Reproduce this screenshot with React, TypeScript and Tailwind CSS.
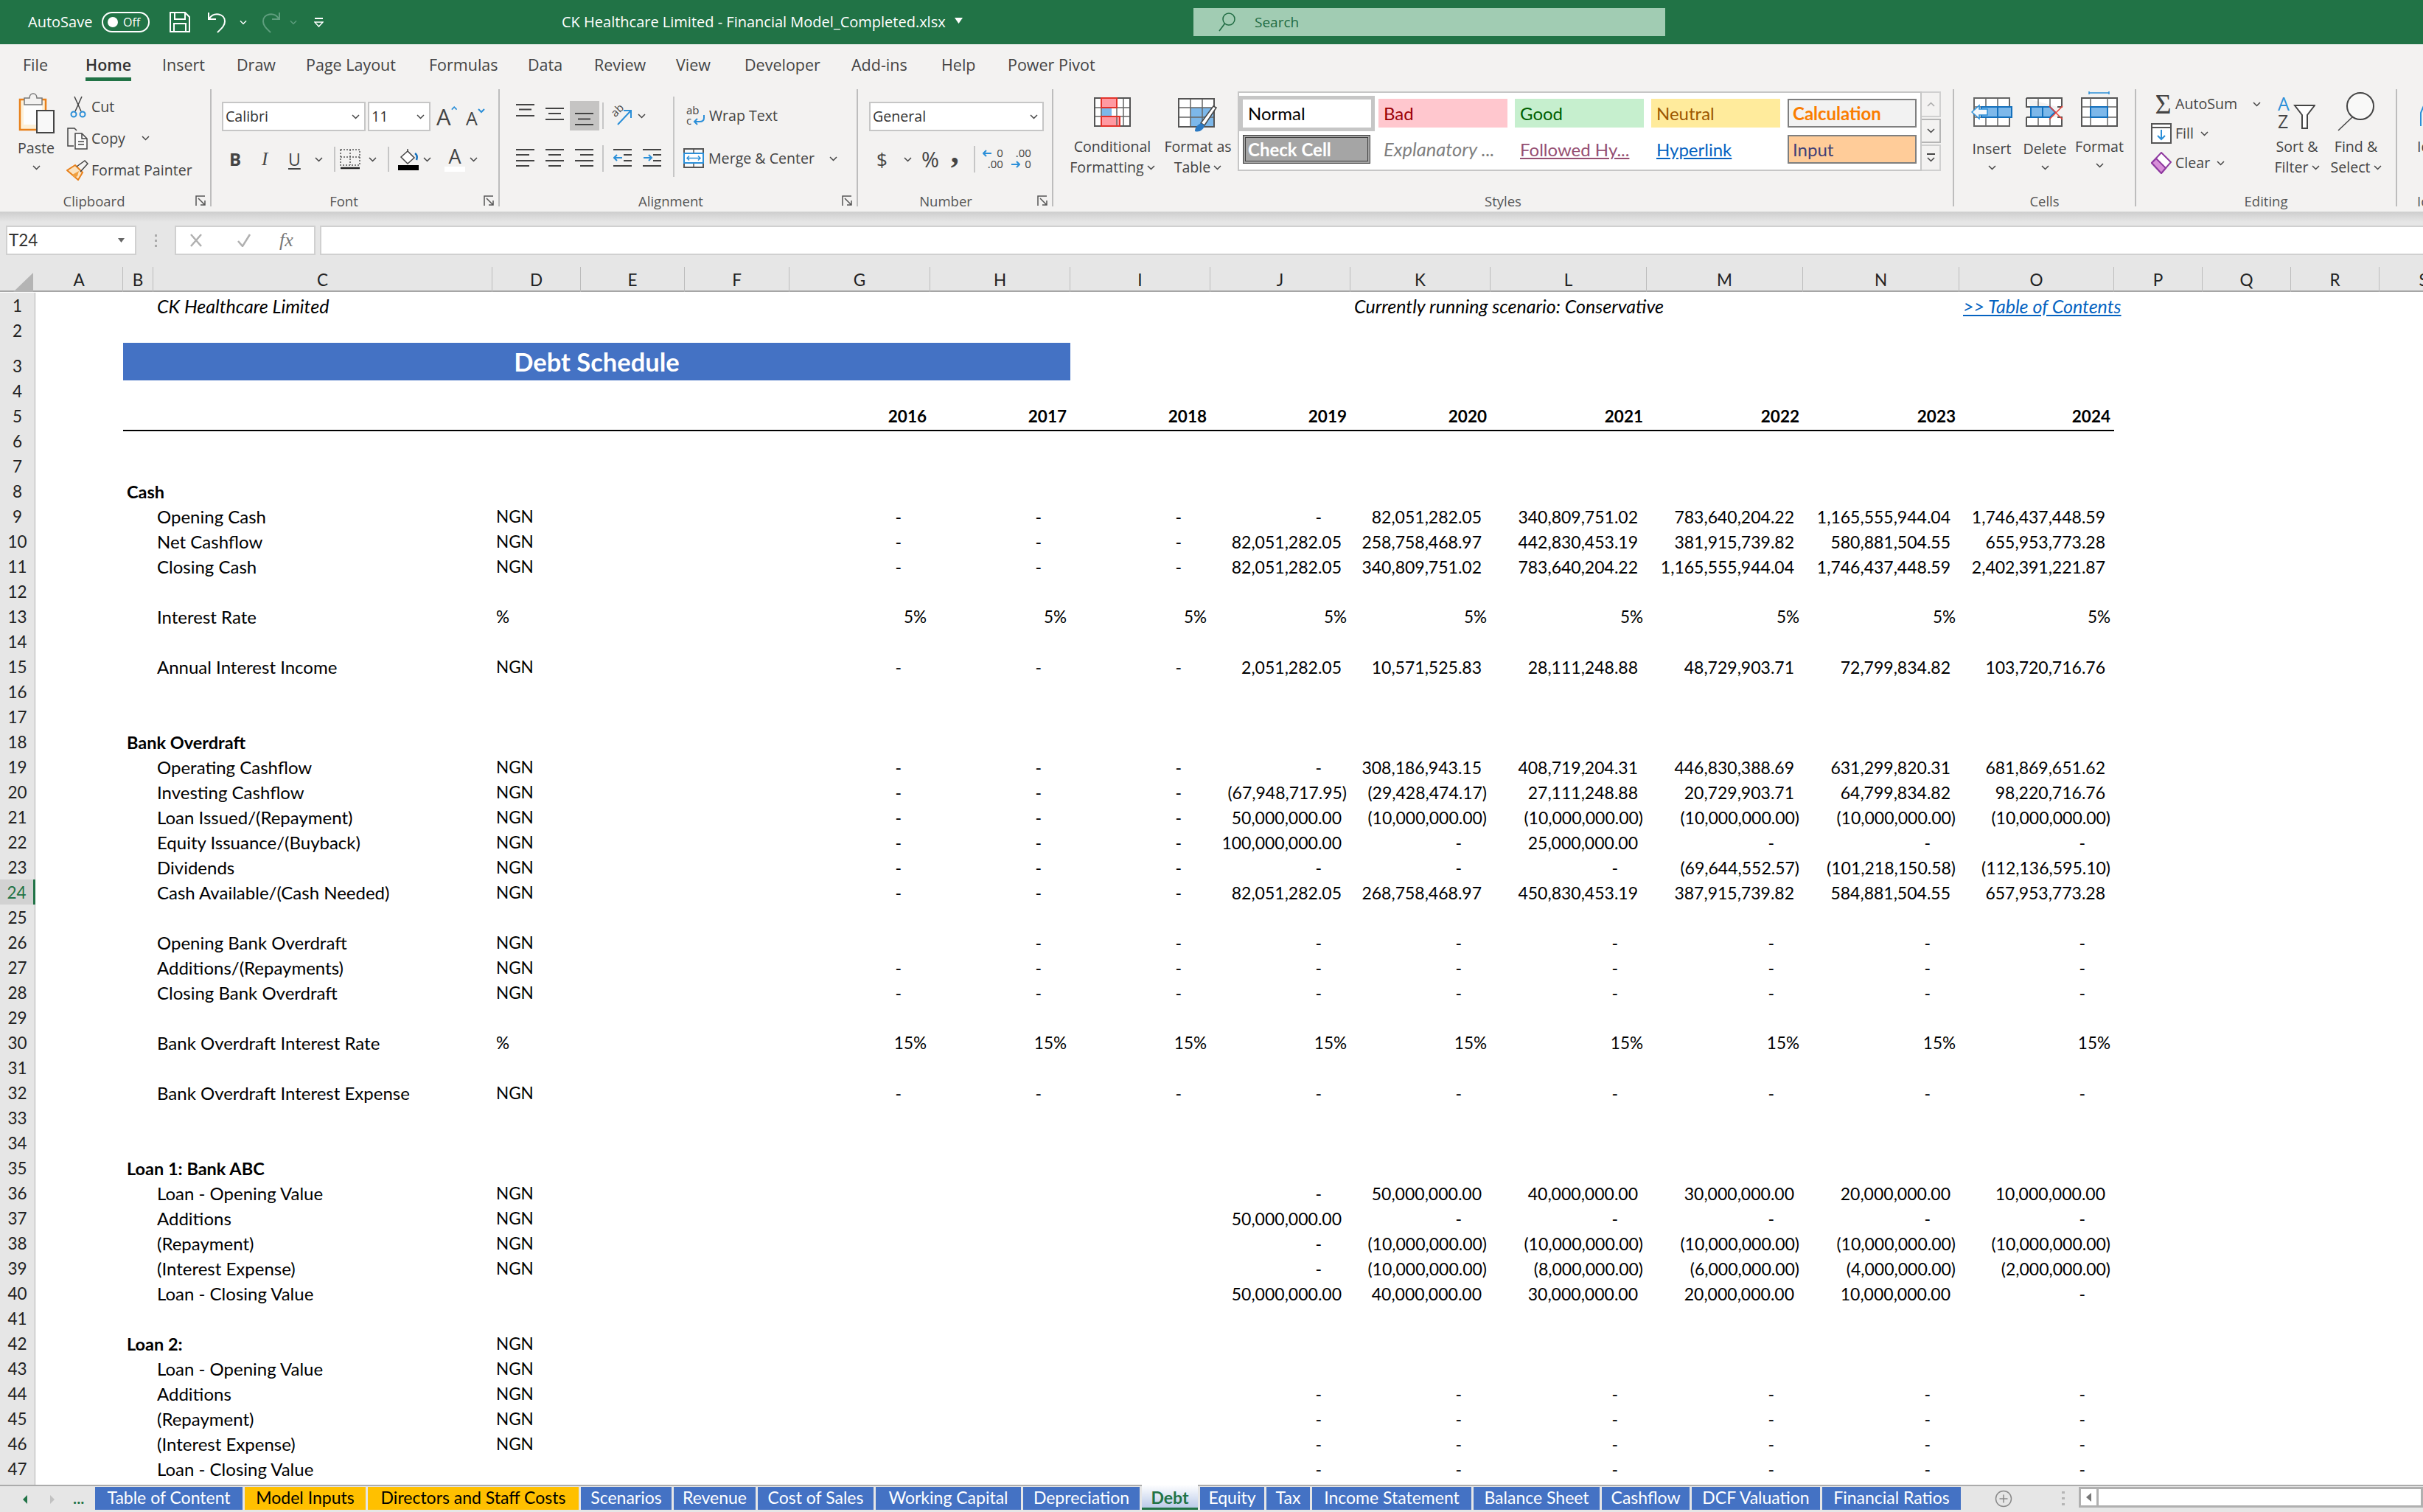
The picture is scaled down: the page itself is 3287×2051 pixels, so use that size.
import type { ReactNode } from "react";

const gridCols =
  "grid grid-cols-[48px_119px_41px_460px_120px_141px_142px_191px_190px_190px_190px_190px_212px_212px_212px_210px_120px_120px_120px_120px]";

const dash3 = ["-", "-", "-"];
const dash6 = ["-", "-", "-", "-", "-", "-"];
const blank3 = ["", "", ""];
const dash9 = [...dash3, ...dash6];

type Row = { b?: string; c?: string; d?: string; v?: string[] };

const rows: Record<number, Row> = {
  1: { c: "CK Healthcare Limited", v: ["", "", "", "", "Currently running scenario: Conservative", "", "", "", ">> Table of Contents"] },
  5: { v: ["2016", "2017", "2018", "2019", "2020", "2021", "2022", "2023", "2024"] },
  8: { b: "Cash" },
  9: { c: "Opening Cash", d: "NGN", v: [...dash3, "-", "82,051,282.05", "340,809,751.02", "783,640,204.22", "1,165,555,944.04", "1,746,437,448.59"] },
  10: { c: "Net Cashflow", d: "NGN", v: [...dash3, "82,051,282.05", "258,758,468.97", "442,830,453.19", "381,915,739.82", "580,881,504.55", "655,953,773.28"] },
  11: { c: "Closing Cash", d: "NGN", v: [...dash3, "82,051,282.05", "340,809,751.02", "783,640,204.22", "1,165,555,944.04", "1,746,437,448.59", "2,402,391,221.87"] },
  13: { c: "Interest Rate", d: "%", v: ["5%", "5%", "5%", "5%", "5%", "5%", "5%", "5%", "5%"] },
  15: { c: "Annual Interest Income", d: "NGN", v: [...dash3, "2,051,282.05", "10,571,525.83", "28,111,248.88", "48,729,903.71", "72,799,834.82", "103,720,716.76"] },
  18: { b: "Bank Overdraft" },
  19: { c: "Operating Cashflow", d: "NGN", v: [...dash3, "-", "308,186,943.15", "408,719,204.31", "446,830,388.69", "631,299,820.31", "681,869,651.62"] },
  20: { c: "Investing Cashflow", d: "NGN", v: [...dash3, "(67,948,717.95)", "(29,428,474.17)", "27,111,248.88", "20,729,903.71", "64,799,834.82", "98,220,716.76"] },
  21: { c: "Loan Issued/(Repayment)", d: "NGN", v: [...dash3, "50,000,000.00", "(10,000,000.00)", "(10,000,000.00)", "(10,000,000.00)", "(10,000,000.00)", "(10,000,000.00)"] },
  22: { c: "Equity Issuance/(Buyback)", d: "NGN", v: [...dash3, "100,000,000.00", "-", "25,000,000.00", "-", "-", "-"] },
  23: { c: "Dividends", d: "NGN", v: [...dash3, "-", "-", "-", "(69,644,552.57)", "(101,218,150.58)", "(112,136,595.10)"] },
  24: { c: "Cash Available/(Cash Needed)", d: "NGN", v: [...dash3, "82,051,282.05", "268,758,468.97", "450,830,453.19", "387,915,739.82", "584,881,504.55", "657,953,773.28"] },
  26: { c: "Opening Bank Overdraft", d: "NGN", v: ["", "-", "-", "-", "-", "-", "-", "-", "-"] },
  27: { c: "Additions/(Repayments)", d: "NGN", v: dash9 },
  28: { c: "Closing Bank Overdraft", d: "NGN", v: dash9 },
  30: { c: "Bank Overdraft Interest Rate", d: "%", v: ["15%", "15%", "15%", "15%", "15%", "15%", "15%", "15%", "15%"] },
  32: { c: "Bank Overdraft Interest Expense", d: "NGN", v: dash9 },
  35: { b: "Loan 1: Bank ABC" },
  36: { c: "Loan - Opening Value", d: "NGN", v: [...blank3, "-", "50,000,000.00", "40,000,000.00", "30,000,000.00", "20,000,000.00", "10,000,000.00"] },
  37: { c: "Additions", d: "NGN", v: [...blank3, "50,000,000.00", "-", "-", "-", "-", "-"] },
  38: { c: "(Repayment)", d: "NGN", v: [...blank3, "-", "(10,000,000.00)", "(10,000,000.00)", "(10,000,000.00)", "(10,000,000.00)", "(10,000,000.00)"] },
  39: { c: "(Interest Expense)", d: "NGN", v: [...blank3, "-", "(10,000,000.00)", "(8,000,000.00)", "(6,000,000.00)", "(4,000,000.00)", "(2,000,000.00)"] },
  40: { c: "Loan - Closing Value", v: [...blank3, "50,000,000.00", "40,000,000.00", "30,000,000.00", "20,000,000.00", "10,000,000.00", "-"] },
  42: { b: "Loan 2:", d: "NGN" },
  43: { c: "Loan - Opening Value", d: "NGN" },
  44: { c: "Additions", d: "NGN", v: [...blank3, ...dash6] },
  45: { c: "(Repayment)", d: "NGN", v: [...blank3, ...dash6] },
  46: { c: "(Interest Expense)", d: "NGN", v: [...blank3, ...dash6] },
  47: { c: "Loan - Closing Value", v: [...blank3, ...dash6] },
};

const columns = ["A", "B", "C", "D", "E", "F", "G", "H", "I", "J", "K", "L", "M", "N", "O", "P", "Q", "R", "S"];

const menu = [
  ["File", "w-[85px]"],
  ["Home", "w-[104px] font-semibold text-[#333]"],
  ["Insert", "w-[101px]"],
  ["Draw", "w-[94px]"],
  ["Page Layout", "w-[167px]"],
  ["Formulas", "w-[134px]"],
  ["Data", "w-[90px]"],
  ["Review", "w-[111px]"],
  ["View", "w-[93px]"],
  ["Developer", "w-[145px]"],
  ["Add-ins", "w-[122px]"],
  ["Help", "w-[90px]"],
  ["Power Pivot", "w-[130px]"],
];

const sheetTabs = [
  ["Table of Content", "w-[200px] bg-[#4472c4] text-white"],
  ["Model Inputs", "w-[164px] bg-[#ffc000] text-black"],
  ["Directors and Staff Costs", "w-[286px] bg-[#ffc000] text-black"],
  ["Scenarios", "w-[123px] bg-[#4472c4] text-white"],
  ["Revenue", "w-[111px] bg-[#4472c4] text-white"],
  ["Cost of Sales", "w-[157px] bg-[#4472c4] text-white"],
  ["Working Capital", "w-[197px] bg-[#4472c4] text-white"],
  ["Depreciation", "w-[158px] bg-[#4472c4] text-white"],
  ["Debt", "w-[76px] -mt-[3px] h-[34px] border-b-[3px] border-[#217346] bg-gradient-to-b from-white to-[#bccbe9] pt-[3px] font-bold text-[#217346]"],
  ["Equity", "w-[87px] bg-[#4472c4] text-white"],
  ["Tax", "w-[59px] bg-[#4472c4] text-white"],
  ["Income Statement", "w-[216px] bg-[#4472c4] text-white"],
  ["Balance Sheet", "w-[171px] bg-[#4472c4] text-white"],
  ["Cashflow", "w-[119px] bg-[#4472c4] text-white"],
  ["DCF Valuation", "w-[174px] bg-[#4472c4] text-white"],
  ["Financial Ratios", "w-[188px] bg-[#4472c4] text-white"],
];

const gray = "#444444";
const blue = "#2b8fd8";

function Chev({ className = "" }: { className?: string }) {
  return (
    <svg width="11" height="7" viewBox="0 0 11 7" className={className}>
      <path d="M1 1l4.5 4.5L10 1" fill="none" stroke={gray} strokeWidth="1.5" />
    </svg>
  );
}

function Lines({ items, h = 40 }: { items: number[][]; h?: number }) {
  return (
    <svg width="26" height={h} viewBox={`0 0 26 ${h}`}>
      {items.map(([a, b, y]) => (
        <path key={y} d={`M${a} ${y}H${b}`} stroke={gray} strokeWidth="2" />
      ))}
    </svg>
  );
}

function Group({ label, className, labelClass = "", launcher, children }: { label: string; className: string; labelClass?: string; launcher?: boolean; children: ReactNode }) {
  return (
    <div className={`relative flex h-full shrink-0 flex-col border-r-2 border-[#bdbdbd] ${className}`}>
      <div className="min-h-0 flex-1">{children}</div>
      <div className={`h-[20px] text-center text-[18.5px] leading-[26px] text-[#555] ${labelClass}`}>{label}</div>
      {launcher && (
        <svg width="15" height="15" viewBox="0 0 15 15" className="absolute bottom-0 right-[5px]">
          <path d="M1 14V1h12" fill="none" stroke="#555" strokeWidth="1.5" />
          <path d="M4 4l9 9M13 7v6H7" fill="none" stroke="#555" strokeWidth="1.5" />
        </svg>
      )}
    </div>
  );
}

function Sep({ className }: { className: string }) {
  return <div className={`w-[2px] shrink-0 bg-[#c6c6c6] ${className}`} />;
}

function PasteIcon() {
  return (
    <svg width="52" height="56" viewBox="0 0 52 56">
      <rect x="4" y="10" width="35" height="41" fill="#fdf0d8" stroke="#e8801a" strokeWidth="2.5" />
      <path d="M9 44V14h25v30z" fill="#fdfdfd" />
      <path d="M10 17V8h7c0-8 10-8 10 0h7v9z" fill="#f3f2f1" stroke="#777" strokeWidth="1.5" />
      <rect x="27" y="25" width="23" height="30" fill="#f8f8f8" stroke={gray} strokeWidth="2" />
    </svg>
  );
}

function CutIcon() {
  return (
    <svg width="22" height="30" viewBox="0 0 22 30">
      <path d="M6 1l9 20M16 1L7 21" stroke={gray} strokeWidth="1.5" />
      <circle cx="5" cy="25" r="3.5" fill="none" stroke={blue} strokeWidth="2" />
      <circle cx="17" cy="25" r="3.5" fill="none" stroke={blue} strokeWidth="2" />
    </svg>
  );
}

function CopyIcon() {
  return (
    <svg width="28" height="30" viewBox="0 0 28 30">
      <path d="M9 25H1V1h9l3 3" fill="none" stroke={gray} strokeWidth="1.5" />
      <path d="M11 8h9l7 7v14H11z" fill="#fafafa" stroke={gray} strokeWidth="1.5" />
      <path d="M20 8v7h7M15 19h8M15 23h8" fill="none" stroke={gray} strokeWidth="1.5" />
    </svg>
  );
}

function PainterIcon() {
  return (
    <svg width="30" height="28" viewBox="0 0 30 28">
      <path d="M1 14l11-7 10 10-6 10z" fill="#fbe3c0" stroke="#e8801a" strokeWidth="2" />
      <path d="M8 20l9-5-2 7-4 2z" fill="#f0a040" />
      <path d="M14 9l11-8 4 4-10 11" fill="none" stroke={gray} strokeWidth="1.5" />
    </svg>
  );
}

function BorderIcon() {
  return (
    <svg width="28" height="28" viewBox="0 0 28 28">
      <rect x="1" y="1" width="26" height="21" fill="none" stroke="#555" strokeWidth="1.5" strokeDasharray="2 2" />
      <path d="M14 1v21M1 11h26" stroke="#555" strokeWidth="1.5" strokeDasharray="2 2" />
      <path d="M1 26h26" stroke="#222" strokeWidth="2.5" />
    </svg>
  );
}

function FillIcon() {
  return (
    <svg width="28" height="30" viewBox="0 0 28 30">
      <path d="M4 12l9-8 9 9-9 8z" fill="#fff" stroke={gray} strokeWidth="1.5" />
      <path d="M13 4V1" stroke={gray} strokeWidth="1.5" />
      <path d="M23 7c3 2 3 6 2 9" fill="none" stroke="#1471bd" strokeWidth="2.5" />
      <rect x="0" y="23" width="28" height="7" fill="#000" />
    </svg>
  );
}

function OrientIcon() {
  return (
    <div className="relative h-[28px] w-[28px]">
      <span className="absolute -left-[1px] -top-[3px] -rotate-45 text-[15px] leading-[18px] text-[#444]">ab</span>
      <svg width="28" height="28" viewBox="0 0 28 28">
        <path d="M9 26L26 8M17 7h10v10" fill="none" stroke={blue} strokeWidth="2" />
      </svg>
    </div>
  );
}

function IndentIcon({ flip = false }: { flip?: boolean }) {
  return (
    <svg width="26" height="28" viewBox="0 0 26 28">
      <path d="M0 2h25M14 9h11M14 17h11M0 24h25" stroke={gray} strokeWidth="2" />
      <path d={flip ? "M1 13h11M8 9l4 4-4 4" : "M1 13h11M5 9l-4 4 4 4"} fill="none" stroke={blue} strokeWidth="2" />
    </svg>
  );
}

function WrapIcon() {
  return (
    <div className="relative h-[30px] w-[26px] text-[15px] leading-[14px] text-[#444]">
      <div>ab</div>
      <div>c</div>
      <svg width="26" height="30" viewBox="0 0 26 30" className="absolute left-0 top-0">
        <path d="M24 14v4c0 4-3 5-6 5h-7M15 19l-4 4 4 4" fill="none" stroke={blue} strokeWidth="2" />
      </svg>
    </div>
  );
}

function MergeIcon() {
  return (
    <svg width="28" height="28" viewBox="0 0 28 28">
      <rect x="1" y="1" width="26" height="25" fill="#fafafa" stroke="#555" strokeWidth="2" />
      <path d="M14 1v6M14 20v6" stroke="#555" strokeWidth="1.5" />
      <rect x="1" y="7" width="26" height="13" fill="#fff" stroke={blue} strokeWidth="2" />
      <path d="M5 13.5h18M8 10.5l-3 3 3 3M20 10.5l3 3-3 3" fill="none" stroke={blue} strokeWidth="1.5" />
    </svg>
  );
}

function DecimalIcon({ more = false }: { more?: boolean }) {
  return (
    <div className="h-[32px] w-[28px] text-right text-[15px] leading-[15px] text-[#444]">
      {more ? (
        <>
          <div className="flex items-center justify-between">
            <svg width="13" height="12" viewBox="0 0 13 12"><path d="M1 6h11M5 2L1 6l4 4" fill="none" stroke={blue} strokeWidth="2" /></svg>
            <span>0</span>
          </div>
          <div>.00</div>
        </>
      ) : (
        <>
          <div>.00</div>
          <div className="flex items-center justify-between">
            <svg width="13" height="12" viewBox="0 0 13 12"><path d="M1 6h11M8 2l4 4-4 4" fill="none" stroke={blue} strokeWidth="2" /></svg>
            <span>0</span>
          </div>
        </>
      )}
    </div>
  );
}

function CondIcon() {
  return (
    <svg width="50" height="40" viewBox="0 0 50 40">
      <rect x="1" y="1" width="48" height="38" fill="#fff" />
      <rect x="10" y="14" width="14" height="12" fill="#7db8ea" />
      <path d="M10 1h21v13H10zM10 26h25v13H10z" fill="#ff9aa2" stroke="#e2332b" strokeWidth="2" />
      <path d="M10 1v38M31 14v25M40 1v38M1 14h48M1 26h48" fill="none" stroke="#666" strokeWidth="1.5" />
      <rect x="1" y="1" width="48" height="38" fill="none" stroke="#555" strokeWidth="2" />
      <path d="M10 1h21v13H10zM10 26h25v13H10z" fill="none" stroke="#e2332b" strokeWidth="2" />
    </svg>
  );
}

function TableIcon() {
  return (
    <svg width="54" height="50" viewBox="0 0 54 50">
      <rect x="1" y="2" width="48" height="38" fill="#fff" />
      <rect x="17" y="14" width="31" height="25" fill="#7db8ea" />
      <path d="M17 2v38M33 2v38M1 14h48M1 27h48" stroke="#666" strokeWidth="1.5" />
      <rect x="1" y="2" width="48" height="38" fill="none" stroke="#555" strokeWidth="2" />
      <path d="M52 14L36 38l-5-3L48 12z" fill="#fff" stroke={gray} strokeWidth="1.5" />
      <path d="M31 35c-5 3-8 6-8 11 6 2 12-2 13-8z" fill="#2b79c2" />
    </svg>
  );
}

function GridBase({ children, w = 50 }: { children: ReactNode; w?: number }) {
  return (
    <svg width={w} height="40" viewBox={`0 0 ${w} 40`}>
      {children}
    </svg>
  );
}

function InsertIcon() {
  return (
    <GridBase w={56}>
      <rect x="4" y="1" width="48" height="38" fill="#fff" stroke="#666" strokeWidth="2" />
      <path d="M20 1v38M36 1v38M4 13h48M4 27h48" stroke="#666" strokeWidth="1.5" />
      <rect x="14" y="13" width="41" height="14" fill="#7db8ea" stroke="#1470bc" strokeWidth="2" />
      <path d="M36 13v14" stroke="#1470bc" strokeWidth="2" />
      <path d="M1 20l10-9v5h11v8H11v5z" fill="#f3f7fb" stroke={blue} strokeWidth="1.5" />
    </GridBase>
  );
}

function DeleteIcon() {
  return (
    <GridBase w={52}>
      <path d="M1 1h48v12h-6M7 13H1V1M1 27h6M43 27h6v12H1V27" fill="#fff" stroke="#555" strokeWidth="2" />
      <path d="M17 1v12M33 1v12M17 27v12M33 27v12" stroke="#666" strokeWidth="1.5" />
      <path d="M7 13h26l7 7-7 7H7z" fill="#7db8ea" stroke="#1470bc" strokeWidth="2" />
      <path d="M23 13v14" stroke="#1470bc" strokeWidth="2" />
      <path d="M32 12l18 18M50 12L32 30" stroke="#ee3f36" strokeWidth="1.5" />
    </GridBase>
  );
}

function FormatIcon() {
  return (
    <svg width="50" height="48" viewBox="0 0 50 48">
      <path d="M11 2h27M11 0v4M38 0v4" stroke={blue} strokeWidth="1.5" />
      <rect x="1" y="9" width="48" height="38" fill="#fff" stroke="#555" strokeWidth="2" />
      <path d="M13 9v38M36 9v38M1 21h48M1 35h48" stroke="#666" strokeWidth="1.5" />
      <rect x="13" y="21" width="23" height="14" fill="#7db8ea" stroke="#1470bc" strokeWidth="2" />
    </svg>
  );
}

function SortIcon() {
  return (
    <div className="flex h-[50px] w-[52px]">
      <div className="flex w-[20px] flex-col text-[25px] leading-[24px]">
        <span className="text-[#2b8fd8]">A</span>
        <span className="text-[#444]">Z</span>
      </div>
      <svg width="30" height="34" viewBox="0 0 30 34" className="ml-[1px] mt-[14px]">
        <path d="M2 1h27L19 14v18h-7V14z" fill="#fff" stroke={gray} strokeWidth="2" />
      </svg>
    </div>
  );
}

function FindIcon() {
  return (
    <svg width="52" height="54" viewBox="0 0 52 54">
      <circle cx="32" cy="20" r="18" fill="#fff" fillOpacity="0.5" stroke={gray} strokeWidth="2" />
      <path d="M21 35L2 53" stroke={gray} strokeWidth="1.5" />
    </svg>
  );
}

function FillDownIcon() {
  return (
    <svg width="28" height="28" viewBox="0 0 28 28">
      <rect x="1" y="1" width="26" height="26" fill="#fff" stroke="#555" strokeWidth="2" />
      <path d="M1 6h26" stroke="#555" strokeWidth="2" />
      <path d="M14 9v13M9 17l5 5 5-5" fill="none" stroke={blue} strokeWidth="2" />
    </svg>
  );
}

function EraserIcon() {
  return (
    <svg width="28" height="30" viewBox="0 0 28 30">
      <path d="M14 1l13 13-13 15L1 15z" fill="#fff" stroke="#8f3aa0" strokeWidth="2" />
      <path d="M7 9l13 13-6 7L1 15z" fill="#d78fd8" stroke="#8f3aa0" strokeWidth="2" />
    </svg>
  );
}

function TitleBar() {
  return (
    <div className="flex h-[60px] shrink-0 items-center bg-[#217346] text-white">
      <span className="ml-[38px] w-[100px] text-[20px]">AutoSave</span>
      <div className="flex h-[28px] w-[65px] items-center rounded-full border-2 border-white pl-[6px]">
        <div className="h-[14px] w-[14px] rounded-full bg-white" />
        <span className="ml-[7px] text-[16px]">Off</span>
      </div>
      <svg width="28" height="28" viewBox="0 0 28 28" className="ml-[27px]">
        <path d="M1 1h20l6 6v20H1z" fill="none" stroke="#fff" strokeWidth="2" />
        <path d="M7 1v9h14V1M6 27V16h16v11" fill="none" stroke="#fff" strokeWidth="2" />
      </svg>
      <svg width="30" height="30" viewBox="0 0 30 30" className="ml-[23px]">
        <path d="M2 2v9h10" fill="none" stroke="#fff" strokeWidth="2" />
        <path d="M3 10C9 1 24 3 24 14c0 6-5 10-10 15" fill="none" stroke="#fff" strokeWidth="2" />
      </svg>
      <svg width="10" height="7" viewBox="0 0 11 7" className="ml-[14px]">
        <path d="M1 1l4.5 4.5L10 1" fill="none" stroke="#fff" strokeWidth="1.5" />
      </svg>
      <svg width="30" height="30" viewBox="0 0 30 30" className="ml-[16px]">
        <path d="M28 2v9H18" fill="none" stroke="#5f9e7e" strokeWidth="2" />
        <path d="M27 10C21 1 6 3 6 14c0 6 5 10 10 15" fill="none" stroke="#5f9e7e" strokeWidth="2" />
      </svg>
      <svg width="10" height="7" viewBox="0 0 11 7" className="ml-[12px]">
        <path d="M1 1l4.5 4.5L10 1" fill="none" stroke="#5f9e7e" strokeWidth="1.5" />
      </svg>
      <svg width="13" height="13" viewBox="0 0 13 13" className="ml-[23px]">
        <path d="M1 1h11" stroke="#fff" strokeWidth="2" />
        <path d="M1 6h11L6.5 12z" fill="none" stroke="#fff" strokeWidth="1.5" />
      </svg>
      <div className="ml-[323px] flex w-[857px] shrink-0 items-center text-[20px]">
        <span>CK Healthcare Limited - Financial Model_Completed.xlsx</span>
        <svg width="11" height="8" viewBox="0 0 11 8" className="ml-[12px] -mt-[4px]">
          <path d="M0 0h11L5.5 8z" fill="#fff" />
        </svg>
      </div>
      <div className="flex h-[38px] w-[640px] items-center bg-[#a1ccb3] pl-[33px] text-[19px] text-[#1f6b42]">
        <svg width="24" height="26" viewBox="0 0 24 26">
          <circle cx="15" cy="9" r="8" fill="none" stroke="#1f6b42" strokeWidth="1.5" />
          <path d="M9.5 15L2 25" stroke="#1f6b42" strokeWidth="1.5" />
        </svg>
        <span className="ml-[26px]">Search</span>
      </div>
    </div>
  );
}

function MenuRow() {
  return (
    <div className="flex h-[61px] shrink-0 pl-[31px] text-[21.5px] text-[#444]">
      {menu.map(([label, cls]) => (
        <div key={label} className={`h-full shrink-0 pt-[12px] leading-[32px] whitespace-nowrap ${cls}`}>
          <span className={label === "Home" ? "block w-fit border-b-[5px] border-[#217346] pb-[1px]" : ""}>{label}</span>
        </div>
      ))}
    </div>
  );
}

function ClipboardGroup() {
  return (
    <Group label="Clipboard" labelClass="pr-[30px]" launcher className="w-[287px]">
      <div className="flex pt-[4px]">
        <div className="ml-[18px] flex w-[62px] flex-col items-center">
          <PasteIcon />
          <span className="mt-[6px] leading-[28px]">Paste</span>
          <Chev className="mt-[9px]" />
        </div>
        <div className="-mt-[2px] ml-[5px] flex flex-col">
          <div className="flex h-[43px] items-center">
            <div className="flex w-[39px] justify-center pl-[2px]"><CutIcon /></div>
            <span>Cut</span>
          </div>
          <div className="flex h-[43px] items-center">
            <div className="flex w-[39px] justify-center"><CopyIcon /></div>
            <span>Copy</span>
            <Chev className="ml-[22px]" />
          </div>
          <div className="flex h-[43px] items-center">
            <div className="flex w-[39px] justify-center"><PainterIcon /></div>
            <span>Format Painter</span>
          </div>
        </div>
      </div>
    </Group>
  );
}

function FontGroup() {
  return (
    <Group label="Font" labelClass="pr-[30px]" launcher className="w-[391px]">
      <div className="flex items-center pl-[14px] pt-[17px]">
        <div className="flex h-[40px] w-[195px] items-center justify-between border-2 border-[#c6c6c6] bg-white px-[3px] text-[#333]">
          Calibri <Chev className="mr-[3px]" />
        </div>
        <div className="ml-[3px] flex h-[40px] w-[85px] items-center justify-between border-2 border-[#c6c6c6] bg-white px-[3px] text-[#333]">
          11 <Chev className="mr-[3px]" />
        </div>
        <div className="ml-[8px] flex h-[30px] w-[28px] items-start leading-[30px]">
          <span className="text-[31px] leading-[30px]">A</span>
          <svg width="10" height="7" viewBox="0 0 10 7"><path d="M1 6l4-4 4 4" fill="none" stroke={blue} strokeWidth="2" /></svg>
        </div>
        <div className="ml-[12px] flex h-[30px] w-[28px] items-start pt-[4px]">
          <span className="text-[25px] leading-[26px]">A</span>
          <svg width="10" height="7" viewBox="0 0 10 7"><path d="M1 1l4 4 4-4" fill="none" stroke={blue} strokeWidth="2" /></svg>
        </div>
      </div>
      <div className="mt-[23px] flex h-[30px] items-center pl-[24px] text-[#444]">
        <span className="w-[44px] text-[24px] font-bold leading-[30px]">B</span>
        <span className="w-[36px] font-['Liberation_Serif'] text-[25px] italic leading-[30px]">I</span>
        <span className="w-[38px] text-[23px] leading-[26px] underline decoration-2 underline-offset-[3px]">U</span>
        <Chev className="ml-[-2px]" />
        <Sep className="ml-[15px] mr-[6px] h-[34px]" />
        <BorderIcon />
        <Chev className="ml-[11px]" />
        <Sep className="ml-[15px] mr-[12px] h-[34px]" />
        <FillIcon />
        <Chev className="ml-[6px]" />
        <div className="ml-[18px] flex h-[34px] w-[28px] flex-col items-center">
          <span className="text-[27px] leading-[26px]">A</span>
          <div className="mt-[1px] h-[7px] w-full bg-white" />
        </div>
        <Chev className="ml-[6px]" />
      </div>
    </Group>
  );
}

function AlignmentGroup() {
  const left = [[0, 25, 2], [0, 18, 9], [0, 25, 17], [0, 18, 24]];
  const center = [[0, 25, 2], [4, 21, 9], [0, 25, 17], [4, 21, 24]];
  const right = [[0, 25, 2], [7, 25, 9], [0, 25, 17], [7, 25, 24]];
  return (
    <Group label="Alignment" labelClass="pr-[20px]" launcher className="w-[486px]">
      <div className="flex">
        <div className="w-[235px] shrink-0 pl-[15px] pt-[16px]">
          <div className="flex h-[40px] items-center">
            <div className="flex h-[40px] w-[40px] justify-center"><Lines items={[[0, 25, 5], [4, 21, 11.5], [0, 25, 20]]} /></div>
            <div className="flex h-[40px] w-[40px] justify-center"><Lines items={[[0, 25, 10], [4, 21, 17], [0, 25, 25]]} /></div>
            <div className="flex h-[40px] w-[40px] justify-center bg-[#c5c4c3]"><Lines items={[[0, 25, 17], [4, 21, 24.5], [0, 25, 32]]} /></div>
            <Sep className="ml-[4px] h-[36px]" />
            <div className="ml-[10px]"><OrientIcon /></div>
            <Chev className="ml-[8px]" />
          </div>
          <div className="mt-[24px] flex h-[28px] items-center">
            <div className="flex w-[40px] justify-center"><Lines h={28} items={left} /></div>
            <div className="flex w-[40px] justify-center"><Lines h={28} items={center} /></div>
            <div className="flex w-[40px] justify-center"><Lines h={28} items={right} /></div>
            <Sep className="ml-[4px] h-[36px]" />
            <div className="ml-[13px]"><IndentIcon /></div>
            <div className="ml-[14px]"><IndentIcon flip /></div>
          </div>
        </div>
        <div className="mt-[10px] flex h-[109px] flex-1 flex-col border-l-2 border-[#c6c6c6]">
          <div className="mt-[11px] flex h-[30px] items-center pl-[16px]">
            <WrapIcon />
            <span className="ml-[5px]">Wrap Text</span>
          </div>
          <div className="mt-[28px] flex h-[30px] items-center pl-[12px]">
            <MergeIcon />
            <span className="ml-[6px]">Merge &amp; Center</span>
            <Chev className="ml-[20px]" />
          </div>
        </div>
      </div>
    </Group>
  );
}

function NumberGroup() {
  return (
    <Group label="Number" labelClass="pr-[25px]" launcher className="w-[265px]">
      <div className="pl-[15px] pt-[17px]">
        <div className="flex h-[40px] w-[237px] items-center justify-between border-2 border-[#c6c6c6] bg-white px-[3px] text-[#333]">
          General <Chev className="mr-[3px]" />
        </div>
      </div>
      <div className="mt-[23px] flex h-[30px] items-center pl-[25px]">
        <span className="text-[26px] leading-[30px]">$</span>
        <Chev className="ml-[22px]" />
        <span className="ml-[13px] text-[29px] leading-[30px]">%</span>
        <span className="ml-[16px] -translate-y-[9px] font-['Liberation_Serif'] text-[44px] font-bold leading-[30px]">,</span>
        <Sep className="ml-[20px] h-[36px]" />
        <div className="ml-[10px]"><DecimalIcon more /></div>
        <div className="ml-[10px]"><DecimalIcon /></div>
      </div>
    </Group>
  );
}

const styleCell = "flex h-[39px] w-[175px] items-center font-['Lato'] text-[24px]";

function StylesGroup() {
  return (
    <Group label="Styles" className="w-[1222px]">
      <div className="flex pt-[3px]">
        <div className="ml-[11px] flex w-[138px] flex-col items-center pt-[8px] leading-[28px]">
          <CondIcon />
          <span className="mt-[13px]">Conditional</span>
          <span className="flex items-center">Formatting <Chev className="ml-[4px]" /></span>
        </div>
        <div className="ml-[1px] flex w-[92px] flex-col items-center pt-[8px] leading-[28px]">
          <TableIcon />
          <span className="mt-[3px]">Format as</span>
          <span className="flex items-center">Table <Chev className="ml-[4px]" /></span>
        </div>
        <div className="ml-[8px] h-[108px] w-[928px] border-2 border-[#c6c6c6] bg-white pt-[3px]">
          <div className="grid grid-cols-[189px_185px_185px_185px_175px] grid-rows-[49px_49px] items-center">
            <div className="flex h-[48px] w-[184px] items-center border-[5px] border-[#c6c6c6] bg-white pl-[7px] font-['Lato'] text-[24px] text-black">Normal</div>
            <div className={`${styleCell} bg-[#ffc7ce] pl-[7px] text-[#9c0006]`}>Bad</div>
            <div className={`${styleCell} bg-[#c6efce] pl-[7px] text-[#006100]`}>Good</div>
            <div className={`${styleCell} bg-[#ffeb9c] pl-[7px] text-[#9c5700]`}>Neutral</div>
            <div className={`${styleCell} border-2 border-[#7f7f7f] bg-[#f2f2f2] pl-[5px] font-bold text-[#fa7d00]`}>Calculation</div>
            <div className={`${styleCell} ml-[5px] !w-[173px] border-[4px] border-double border-[#3f3f3f] bg-[#a5a5a5] pl-[3px] font-bold text-white`}>Check Cell</div>
            <div className={`${styleCell} !text-[25.5px] pl-[7px] italic text-[#7f7f7f]`}>Explanatory ...</div>
            <div className={`${styleCell} whitespace-nowrap pl-[7px] text-[#954f72] underline`}>Followed Hy...</div>
            <div className={`${styleCell} pl-[7px] text-[#0563c1] underline`}>Hyperlink</div>
            <div className={`${styleCell} border-2 border-[#7f7f7f] bg-[#ffcc99] pl-[5px] text-[#3f3f76]`}>Input</div>
          </div>
        </div>
        <div className="flex h-[108px] w-[26px] flex-col justify-between">
          <div className="flex h-[35px] items-center justify-center border-2 border-l-0 border-[#d0d0d0]">
            <svg width="11" height="7" viewBox="0 0 11 7"><path d="M1 6l4.5-4.5L10 6" fill="none" stroke="#aaa" strokeWidth="1.5" /></svg>
          </div>
          <div className="flex h-[33px] items-center justify-center border-2 border-l-0 border-[#b5b5b5]"><Chev /></div>
          <div className="flex h-[36px] flex-col items-center justify-center gap-[3px] border-2 border-l-0 border-[#d0d0d0]">
            <div className="h-[2px] w-[11px] bg-[#444]" />
            <Chev />
          </div>
        </div>
      </div>
    </Group>
  );
}

function CellColumn({ className, icon, label }: { className: string; icon: ReactNode; label: string }) {
  return (
    <div className={`flex flex-col items-center ${className}`}>
      {icon}
      <span className="leading-[28px]">{label}</span>
      <Chev className="mt-[8px]" />
    </div>
  );
}

function CellsGroup() {
  return (
    <Group label="Cells" className="w-[247px]">
      <div className="flex pl-[15px]">
        <CellColumn className="w-[72px] pt-[11px]" icon={<div className="mb-[16px]"><InsertIcon /></div>} label="Insert" />
        <CellColumn className="w-[72px] pt-[11px]" icon={<div className="mb-[16px]"><DeleteIcon /></div>} label="Delete" />
        <CellColumn className="w-[76px] pt-[3px]" icon={<div className="mb-[13px]"><FormatIcon /></div>} label="Format" />
      </div>
    </Group>
  );
}

function EditingGroup() {
  return (
    <Group label="Editing" className="w-[354px]">
      <div className="flex">
        <div className="ml-[20px] w-[162px] shrink-0">
          <div className="flex h-[40px] items-center">
            <span className="w-[33px] text-center font-['Liberation_Serif'] text-[38px] leading-[30px]">Σ</span>
            <span>AutoSum</span>
            <Chev className="ml-[21px]" />
          </div>
          <div className="flex h-[40px] items-center">
            <div className="w-[33px]"><FillDownIcon /></div>
            <span>Fill</span>
            <Chev className="ml-[9px]" />
          </div>
          <div className="flex h-[40px] items-center">
            <div className="w-[33px]"><EraserIcon /></div>
            <span>Clear</span>
            <Chev className="ml-[9px]" />
          </div>
        </div>
        <div className="flex w-[72px] flex-col items-center pt-[7px] leading-[28px]">
          <SortIcon />
          <span className="mt-[7px]">Sort &amp;</span>
          <span className="flex items-center">Filter <Chev className="ml-[4px]" /></span>
        </div>
        <div className="ml-[4px] flex w-[80px] flex-col items-center pt-[3px] leading-[28px]">
          <FindIcon />
          <span className="mt-[7px]">Find &amp;</span>
          <span className="flex items-center">Select <Chev className="ml-[4px]" /></span>
        </div>
      </div>
    </Group>
  );
}

function IdeasGroup() {
  return (
    <div className="flex h-full flex-1 flex-col overflow-hidden pl-[27px] whitespace-nowrap">
      <div className="flex-1">
        <svg width="10" height="30" viewBox="0 0 10 30" className="ml-[4px] mt-[20px]">
          <path d="M6 0L1 12v18" fill="none" stroke={blue} strokeWidth="2" />
        </svg>
        <div className="mt-[14px] leading-[28px]">Ideas</div>
      </div>
      <div className="h-[20px] text-[18.5px] leading-[26px] text-[#555]">Ideas</div>
    </div>
  );
}

function Ribbon() {
  return (
    <div className="flex h-[166px] shrink-0 items-start bg-[#f3f2f1] text-[19.6px] text-[#444]">
      <div className="flex h-[159px] w-full whitespace-nowrap">
        <ClipboardGroup />
        <FontGroup />
        <AlignmentGroup />
        <NumberGroup />
        <StylesGroup />
        <CellsGroup />
        <EditingGroup />
        <IdeasGroup />
      </div>
    </div>
  );
}

function FormulaBar() {
  return (
    <div className="h-[75px] shrink-0 bg-[#e6e6e6]">
      <div className="h-[14px] bg-gradient-to-b from-[#cdcdcd] to-[#e6e6e6]" />
      <div className="mt-[5px] flex h-[40px] items-stretch pl-[8px] text-[#333]">
        <div className="flex w-[177px] items-center justify-between border-2 border-[#d0d0d0] bg-white pl-[2px] pr-[14px] font-['Lato'] text-[22.5px]">
          T24
          <svg width="9" height="6" viewBox="0 0 9 6"><path d="M0 0h9L4.5 6z" fill="#666" /></svg>
        </div>
        <div className="flex w-[52px] flex-col items-center justify-center gap-[4px]">
          <div className="h-[3px] w-[3px] bg-[#aaa]" />
          <div className="h-[3px] w-[3px] bg-[#aaa]" />
          <div className="h-[3px] w-[3px] bg-[#aaa]" />
        </div>
        <div className="flex w-[191px] items-center border-2 border-[#d0d0d0] bg-white">
          <svg width="18" height="18" viewBox="0 0 18 18" className="ml-[18px]"><path d="M2 1l14 16M16 1L2 17" stroke="#b0b0b0" strokeWidth="2.5" /></svg>
          <svg width="20" height="18" viewBox="0 0 20 18" className="ml-[46px]"><path d="M2 10l6 7L18 1" fill="none" stroke="#b0b0b0" strokeWidth="2.5" /></svg>
          <span className="ml-[38px] font-['Liberation_Serif'] text-[26px] italic leading-[30px] text-[#777]">fx</span>
        </div>
        <div className="ml-[6px] flex-1 border-2 border-r-0 border-[#d0d0d0] bg-white" />
      </div>
    </div>
  );
}

function ColumnHeader() {
  return (
    <div className={`${gridCols} h-[34px] shrink-0 border-b-2 border-[#a6a6a6] bg-[#e6e6e6] text-[22.5px] text-[#222]`}>
      <div className="flex items-end justify-end pb-[1px] pr-[2px]">
        <svg width="28" height="26" viewBox="0 0 28 26"><path d="M27 0v26H0z" fill="#b4b4b4" /></svg>
      </div>
      {columns.map((c) => (
        <div key={c} className="border-r border-[#bcbcbc] text-center leading-[35px]">
          {c}
        </div>
      ))}
    </div>
  );
}

function valueClass(v: string) {
  if (v === "-") return "pr-[39px] text-right";
  if (v.endsWith(")")) return "pr-[5px] text-right";
  if (v.endsWith("%") || v.length === 4) return "pr-[5px] text-right text-[22.5px]";
  return "pr-[12px] text-right";
}

function SheetRow({ n }: { n: number }) {
  const row = rows[n] ?? {};
  const active = n === 24;
  const line = n === 5 ? "border-b-2 border-black" : "";
  const values = row.v ?? ["", "", "", "", "", "", "", "", ""];
  return (
    <div className={`${gridCols} ${n === 3 ? "h-[48px]" : "h-[34px]"} shrink-0 leading-[36px] text-black`}>
      <div
        className={
          active
            ? "border-b border-r-[3px] border-b-[#b0b0b0] border-r-[#217346] bg-[#d2d2d2] text-center text-[22.5px] text-[#217346]"
            : `border-b border-r border-[#b0b0b0] bg-[#e6e6e6] text-center text-[22.5px] text-[#222] ${n === 3 ? "pt-[14px]" : ""}`
        }
      >
        {n}
      </div>
      <div />
      {n === 3 ? (
        <div className="col-span-7 flex items-center justify-center bg-[#4472c4] text-[34.5px] font-bold text-white">Debt Schedule</div>
      ) : (
        <>
          <div className={`whitespace-nowrap pl-[5px] text-[23.5px] font-bold ${line}`}>{row.b}</div>
          <div className={`whitespace-nowrap pl-[5px] ${n === 1 ? "text-[25px] italic" : "text-[24px]"} ${line}`}>{row.c}</div>
          <div className={`pl-[5px] text-[22.5px] ${line}`}>{row.d}</div>
          <div className={line} />
          <div className={line} />
          {values.map((v, i) => {
            if (n === 1) {
              return (
                <div key={i} className={`whitespace-nowrap pl-[5px] text-[25px] italic ${i === 8 ? "text-[#0563c1] underline" : ""}`}>
                  {v}
                </div>
              );
            }
            return (
              <div key={i} className={`whitespace-nowrap ${valueClass(v)} ${n === 5 ? "font-bold" : ""} ${line}`}>
                {v}
              </div>
            );
          })}
        </>
      )}
    </div>
  );
}

function Sheet() {
  const numbers = Array.from({ length: 48 }, (_, i) => i + 1);
  return (
    <div className="min-h-0 flex-1 overflow-hidden bg-white pt-[1px] font-['Lato'] text-[23px]">
      {numbers.map((n) => (
        <SheetRow key={n} n={n} />
      ))}
    </div>
  );
}

function TabBar() {
  return (
    <div className="flex h-[37px] shrink-0 border-t-2 border-[#ababab] bg-[#e6e6e6] pt-[1px]">
      <div className="flex w-[129px] shrink-0 items-center">
        <svg width="6" height="12" viewBox="0 0 6 12" className="ml-[31px]"><path d="M6 0v12L0 6z" fill="#217346" /></svg>
        <svg width="6" height="12" viewBox="0 0 6 12" className="ml-[31px]"><path d="M0 0v12l6-6z" fill="#c2c2c2" /></svg>
        <span className="ml-[25px] -mt-[2px] text-[18px] font-bold leading-[18px] text-[#217346]">...</span>
      </div>
      <div className="flex h-[31px] shrink-0 gap-[3px] font-['Lato'] text-[23px] leading-[29px]">
        {sheetTabs.map(([label, cls]) => (
          <div key={label} className={`shrink-0 whitespace-nowrap text-center ${cls}`}>
            {label}
          </div>
        ))}
      </div>
      <svg width="24" height="24" viewBox="0 0 24 24" className="ml-[46px] mt-[4px] shrink-0">
        <circle cx="12" cy="12" r="10.5" fill="none" stroke="#8a8a8a" strokeWidth="1.5" />
        <path d="M12 6.5v11M6.5 12h11" stroke="#8a8a8a" strokeWidth="1.5" />
      </svg>
      <div className="ml-[67px] mt-[6px] flex h-[19px] w-[4px] shrink-0 flex-col justify-between">
        <div className="h-[3px] bg-[#b5b5b5]" />
        <div className="h-[3px] bg-[#b5b5b5]" />
        <div className="h-[3px] bg-[#b5b5b5]" />
      </div>
      <div className="ml-[19px] flex h-[28px] flex-1 border-[3px] border-[#b0b0b0] bg-white">
        <div className="flex w-[24px] items-center justify-center border-r-[3px] border-[#b0b0b0]">
          <svg width="7" height="12" viewBox="0 0 7 12"><path d="M7 0v12L0 6z" fill="#777" /></svg>
        </div>
      </div>
    </div>
  );
}

export default function App() {
  return (
    <div className="flex h-[2051px] w-[3287px] flex-col overflow-hidden font-['Open_Sans',sans-serif]">
      <TitleBar />
      <div className="bg-[#f3f2f1]">
        <MenuRow />
      </div>
      <Ribbon />
      <FormulaBar />
      <div className="font-['Lato']">
        <ColumnHeader />
      </div>
      <Sheet />
      <TabBar />
    </div>
  );
}
